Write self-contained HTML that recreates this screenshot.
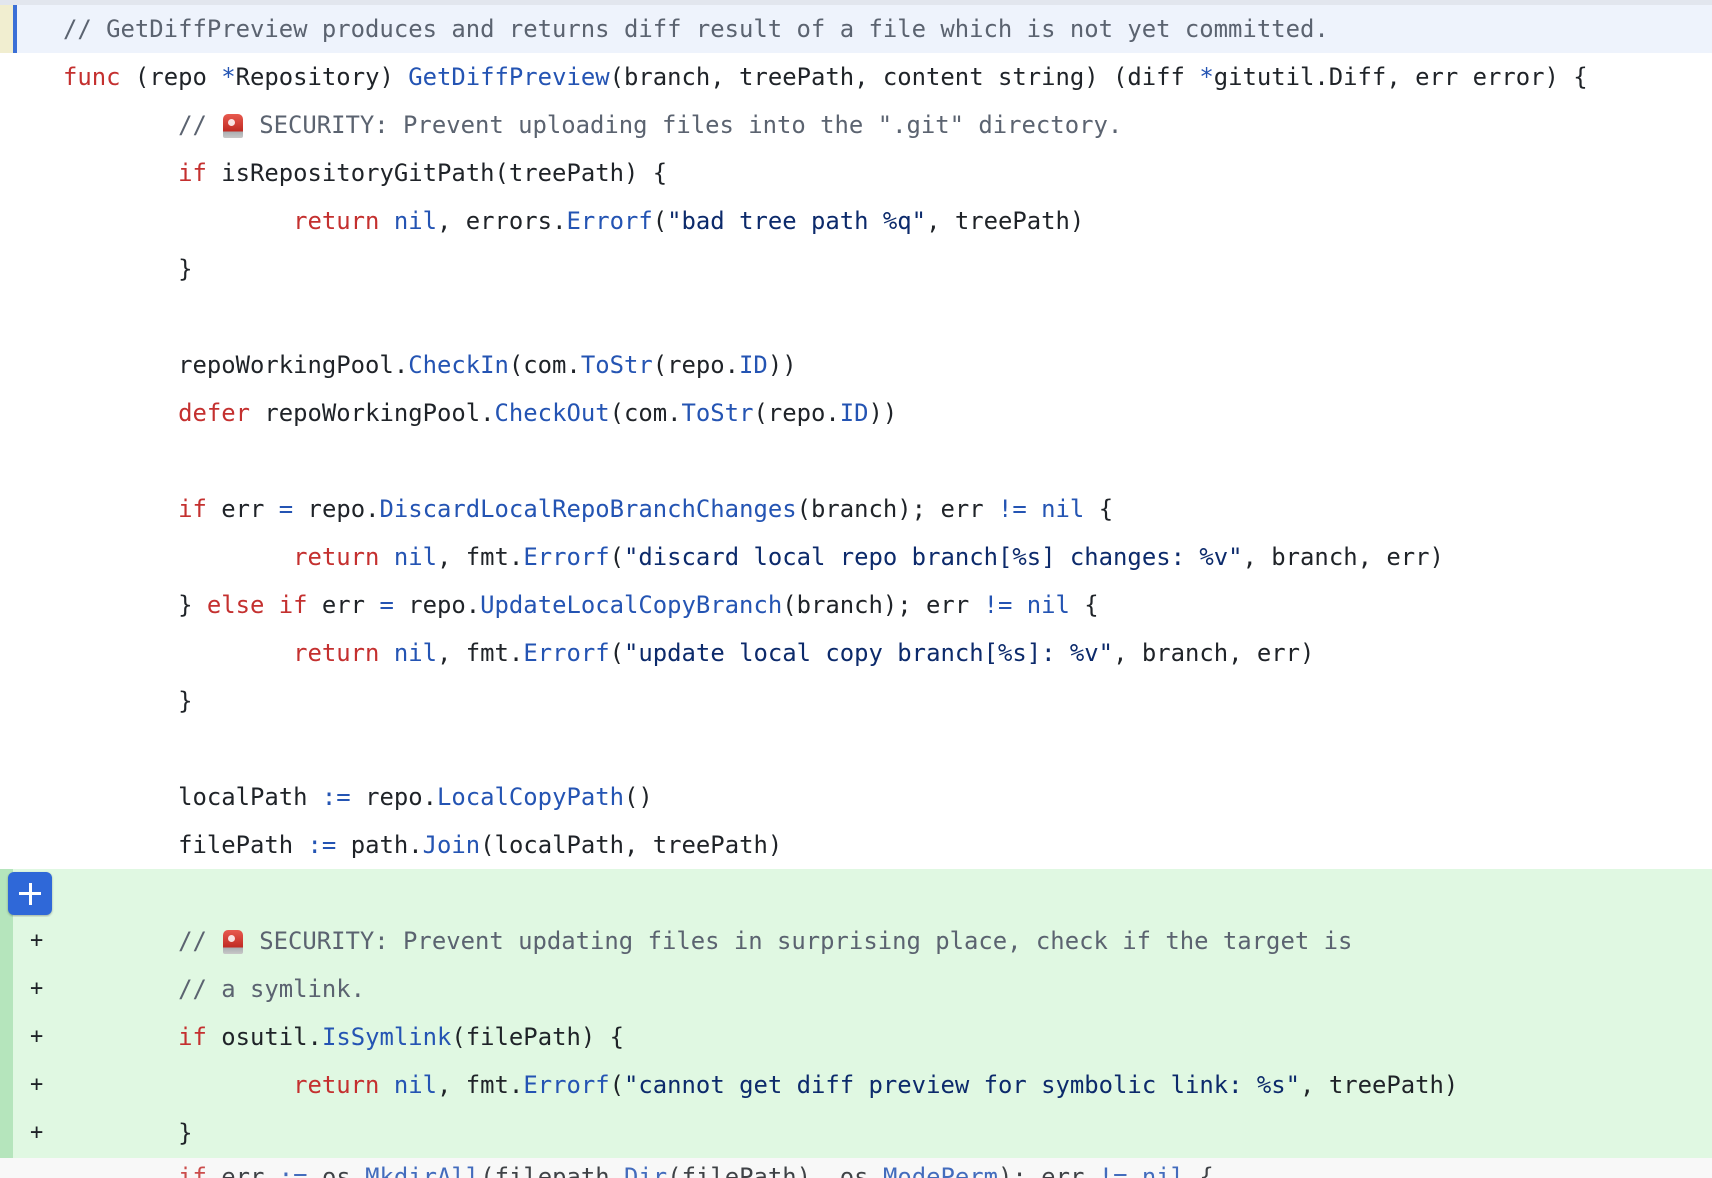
<!DOCTYPE html>
<html><head><meta charset="utf-8"><style>
html,body{margin:0;padding:0;background:#fff;width:1712px;height:1178px;overflow:hidden}
.wrap{position:absolute;left:0;top:0;width:1712px;height:1178px}
.topb{position:absolute;left:0;top:0;width:1712px;height:5px;background:#e2e6ee}
.row{position:absolute;left:0;width:1712px;height:48px}
.code{position:absolute;left:63px;top:0;height:48px;line-height:48px;font-family:"DejaVu Sans Mono","Liberation Mono",monospace;font-size:23.9px;color:#1f2328;white-space:pre}
.k{color:#c4302f}.f{color:#2454b3}.s{color:#0c2a6b}.c{color:#5b6370}.n{color:#2454b3}
.g{background:#e0f8e2}
.gbar{position:absolute;left:0;top:0;width:13px;height:48px;background:#b5e5bc}
.pm{position:absolute;left:30px;top:0;line-height:48px;font-family:"DejaVu Sans Mono",monospace;font-size:22px;color:#1f2328}
.em{display:inline-block;width:20px;height:24px;margin-left:2px;margin-right:16px;vertical-align:-5px;border-radius:5px 5px 2px 2px;background:linear-gradient(#e85a4f,#c02a22 72%,#a8acb0 72%,#c8c8c8);position:relative}
.em:after{content:"";position:absolute;left:5px;top:5px;width:7px;height:7px;background:#fff;border-radius:50%;opacity:.85}
</style></head><body><div class="wrap">
<div class="topb"></div>
<div class="row" style="top:5px;background:#eef3fc"><div style="position:absolute;left:0;top:0;width:13px;height:48px;background:#f1eed0"></div><div style="position:absolute;left:13px;top:0;width:4px;height:48px;background:#3b6fd6"></div><div class="code"><span class="c">// GetDiffPreview produces and returns diff result of a file which is not yet committed.</span></div></div>
<div class="row" style="top:53px"><div class="code"><span class="k">func</span> (repo <span class="f">*</span>Repository) <span class="f">GetDiffPreview</span>(branch, treePath, content string) (diff <span class="f">*</span>gitutil.Diff, err error) {</div></div>
<div class="row" style="top:101px"><div class="code"><span class="c">        // <span class="em"></span>SECURITY: Prevent uploading files into the ".git" directory.</span></div></div>
<div class="row" style="top:149px"><div class="code">        <span class="k">if</span> isRepositoryGitPath(treePath) {</div></div>
<div class="row" style="top:197px"><div class="code">                <span class="k">return</span> <span class="n">nil</span>, errors.<span class="f">Errorf</span>(<span class="s">"bad tree path %q"</span>, treePath)</div></div>
<div class="row" style="top:245px"><div class="code">        }</div></div>
<div class="row" style="top:341px"><div class="code">        repoWorkingPool.<span class="f">CheckIn</span>(com.<span class="f">ToStr</span>(repo.<span class="n">ID</span>))</div></div>
<div class="row" style="top:389px"><div class="code">        <span class="k">defer</span> repoWorkingPool.<span class="f">CheckOut</span>(com.<span class="f">ToStr</span>(repo.<span class="n">ID</span>))</div></div>
<div class="row" style="top:485px"><div class="code">        <span class="k">if</span> err <span class="f">=</span> repo.<span class="f">DiscardLocalRepoBranchChanges</span>(branch); err <span class="f">!=</span> <span class="n">nil</span> {</div></div>
<div class="row" style="top:533px"><div class="code">                <span class="k">return</span> <span class="n">nil</span>, fmt.<span class="f">Errorf</span>(<span class="s">"discard local repo branch[%s] changes: %v"</span>, branch, err)</div></div>
<div class="row" style="top:581px"><div class="code">        } <span class="k">else if</span> err <span class="f">=</span> repo.<span class="f">UpdateLocalCopyBranch</span>(branch); err <span class="f">!=</span> <span class="n">nil</span> {</div></div>
<div class="row" style="top:629px"><div class="code">                <span class="k">return</span> <span class="n">nil</span>, fmt.<span class="f">Errorf</span>(<span class="s">"update local copy branch[%s]: %v"</span>, branch, err)</div></div>
<div class="row" style="top:677px"><div class="code">        }</div></div>
<div class="row" style="top:773px"><div class="code">        localPath <span class="f">:=</span> repo.<span class="f">LocalCopyPath</span>()</div></div>
<div class="row" style="top:821px"><div class="code">        filePath <span class="f">:=</span> path.<span class="f">Join</span>(localPath, treePath)</div></div>
<div class="row g" style="top:869px"><div class="gbar"></div><div style="position:absolute;left:8px;top:3px;width:44px;height:43px;background:#2f68d8;border-radius:6px;box-shadow:0 1px 2px rgba(0,0,0,.3)"><div style="position:absolute;left:11px;top:20px;width:22px;height:3px;background:#fff"></div><div style="position:absolute;left:20.5px;top:10.5px;width:3px;height:22px;background:#fff"></div></div></div>
<div class="row g" style="top:917px"><div class="gbar"></div><div class="pm">+</div><div class="code"><span class="c">        // <span class="em"></span>SECURITY: Prevent updating files in surprising place, check if the target is</span></div></div>
<div class="row g" style="top:965px"><div class="gbar"></div><div class="pm">+</div><div class="code"><span class="c">        // a symlink.</span></div></div>
<div class="row g" style="top:1013px"><div class="gbar"></div><div class="pm">+</div><div class="code">        <span class="k">if</span> osutil.<span class="f">IsSymlink</span>(filePath) {</div></div>
<div class="row g" style="top:1061px"><div class="gbar"></div><div class="pm">+</div><div class="code">                <span class="k">return</span> <span class="n">nil</span>, fmt.<span class="f">Errorf</span>(<span class="s">"cannot get diff preview for symbolic link: %s"</span>, treePath)</div></div>
<div class="row g" style="top:1109px;height:49px"><div class="gbar" style="height:49px"></div><div class="pm">+</div><div class="code">        }</div></div>
<div class="row" style="top:1158px;height:20px;background:#f8f8f8;overflow:hidden"><div class="code" style="top:-5px;opacity:.85">        <span class="k">if</span> err <span class="f">:=</span> os.<span class="f">MkdirAll</span>(filepath.<span class="f">Dir</span>(filePath), os.<span class="f">ModePerm</span>); err <span class="f">!=</span> <span class="n">nil</span> {</div></div>
</div></body></html>
